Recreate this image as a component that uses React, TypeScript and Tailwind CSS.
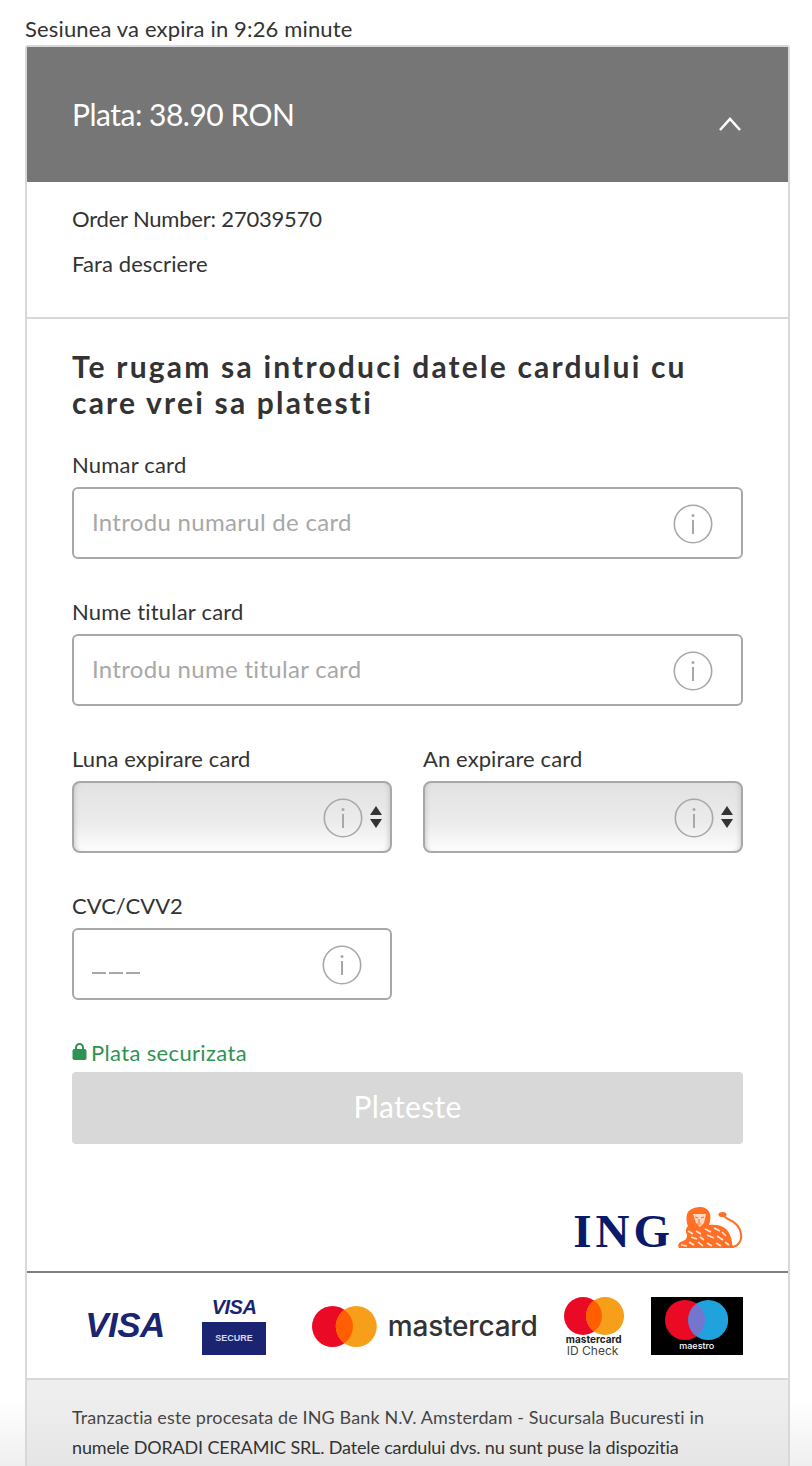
const font = "font-['Lato','Open_Sans',sans-serif]"

function InfoIcon() {
  return (
    <svg width="40" height="40" viewBox="0 0 40 40" className="mt-[2px] shrink-0" fill="none">
      <circle cx="20" cy="20" r="18.7" stroke="#a8a8a8" strokeWidth="1.6" />
      <circle cx="20" cy="11.5" r="1.5" fill="#a8a8a8" />
      <rect x="19" y="16" width="2" height="14" fill="#a8a8a8" />
    </svg>
  )
}

function Field({ label, placeholder }: { label: string; placeholder: string }) {
  return (
    <div className="mb-[38px]">
      <div className="h-[29px] text-[22px] leading-[29px] tracking-[0.2px] text-[#333]">{label}</div>
      <div className="mt-[8px] flex h-[72px] items-center justify-between rounded-[6px] border-2 border-[#a8a8a8] pl-[18px] pr-[28px]">
        <span className="mb-[2px] text-[24px] tracking-[0.3px] text-[#a8a8a8]">{placeholder}</span>
        <InfoIcon />
      </div>
    </div>
  )
}

function SelectField({ label }: { label: string }) {
  return (
    <div className="w-[320px]">
      <div className="h-[29px] text-[22px] leading-[29px] tracking-[0.1px] text-[#333]">{label}</div>
      <div className="mt-[8px] flex h-[72px] items-center justify-end rounded-[8px] border-2 border-[#a8a8a8] bg-[linear-gradient(#e2e2e2,#ececec_60%,#fdfdfd)] pr-[8px] shadow-[inset_5px_0_5px_-4px_#c8c8c8,inset_-5px_0_5px_-4px_#c8c8c8]">
        <InfoIcon />
        <svg width="12" height="22" viewBox="0 0 12 22" className="ml-[7px]" fill="#333">
          <path d="M6 0 L12 9 H0 Z" />
          <path d="M6 22 L0 13 H12 Z" />
        </svg>
      </div>
    </div>
  )
}

// orange ING lion, body with light fur marks
function Lion() {
  return (
    <svg width="65" height="42" viewBox="0 0 65 42" className="mt-[1px]">
      <path
        d="M1 41 C-1 38 1 35 5 34 C8 33 9 31 9 28 C7 24 8 21 10 19 C8 15 8 8 10 5 C13 1 19 0 23 0 C27 0 31 3 32 7 C33 11 32 15 31 18 C37 17 44 18 48 22 C52 26 54 32 54 37 L56 41 Z"
        fill="#ff6f26"
      />
      <path d="M15 7 L28 7 L26 16 L22 20 L18 16 Z" fill="#ffd9c2" />
      <path d="M17 10 L20 11 M26 10 L23 11 M21 12 L21 16 M19 17 L23 17" stroke="#ff6f26" strokeWidth="1.2" fill="none" />
      <path
        d="M10 24 L15 27 M18 24 L23 27 M27 22 L33 25 M36 21 L42 24 M44 25 L48 29 M29 28 L36 31 M39 29 L45 33 M13 30 L19 32 M22 30 L26 33 M3 38 L9 39 M11 35 L16 38 M20 35 L25 39 M29 36 L34 39 M38 36 L43 39 M47 35 L51 38"
        stroke="#ffe6d6"
        strokeWidth="1.6"
        fill="none"
      />
      <path d="M53 40 C60 40 64 34 63 27 C62 19 57 15 50 12 C48 11 47 10 46 9" stroke="#ff6f26" strokeWidth="2" fill="none" />
      <ellipse cx="44.5" cy="7.5" rx="4" ry="2.6" fill="#ff6f26" />
    </svg>
  )
}

function VisaWord({ size }: { size: string }) {
  return <span className={`font-['Liberation_Sans'] font-bold italic tracking-[-0.5px] text-[#1a2471] ${size}`}>VISA</span>
}

function Circles({ d, right, mid }: { d: number; right: string; mid: string }) {
  const r = d / 2
  const gap = d * 0.42
  const h = Math.sqrt(r * r - (r - gap / 2) ** 2)
  return (
    <svg width={d * 2 - gap} height={d} viewBox={`0 0 ${d * 2 - gap} ${d}`}>
      <circle cx={r} cy={r} r={r} fill="#eb0a26" />
      <circle cx={d - gap + r} cy={r} r={r} fill={right} />
      <path
        d={`M${d - gap / 2} ${r - h} A${r} ${r} 0 0 1 ${d - gap / 2} ${r + h} A${r} ${r} 0 0 1 ${d - gap / 2} ${r - h} Z`}
        fill={mid}
      />
    </svg>
  )
}

export default function App() {
  return (
    <div className={`relative h-[1466px] w-[812px] overflow-hidden bg-white ${font}`}>
      <div className="h-[45px] pl-[25px] pt-[14px] text-[22px] leading-[29px] tracking-[0.15px] text-[#333]">
        Sesiunea va expira in 9:26 minute
      </div>
      <div className="ml-[25px] w-[765px] rounded-t-[3px] border-2 border-[#d8d8d8]">
        <div className="flex h-[135px] items-start justify-between bg-[#767676] pl-[45px] pr-[46px] pt-[47px] text-white">
          <span className="text-[30px] leading-[40px] tracking-[-0.5px]">Plata: 38.90 RON</span>
          <svg width="24" height="16" viewBox="0 0 24 16" fill="none" className="mt-[22px]">
            <path d="M2 14 L12 3 L22 14" stroke="#fff" strokeWidth="2.6" />
          </svg>
        </div>

        <div className="h-[137px] border-b-2 border-[#d8d8d8] pl-[45px] pt-[22px] text-[22px] leading-[29px] text-[#333]">
          <div className="tracking-[-0.2px]">Order Number: 27039570</div>
          <div className="mt-[16px] tracking-[0.1px]">Fara descriere</div>
        </div>

        <div className="px-[45px] pt-[29px]">
          <h1 className="text-[30px] font-bold leading-[36px] tracking-[2.2px] text-[#333]">
            Te rugam sa introduci datele cardului cu care vrei sa platesti
          </h1>
          <div className="mt-[30px]">
            <Field label="Numar card" placeholder="Introdu numarul de card" />
            <Field label="Nume titular card" placeholder="Introdu nume titular card" />
          </div>
          <div className="flex gap-[31px]">
            <SelectField label="Luna expirare card" />
            <SelectField label="An expirare card" />
          </div>
          <div className="mt-[38px] w-[320px]">
            <div className="h-[29px] text-[22px] leading-[29px] text-[#333]">CVC/CVV2</div>
            <div className="mt-[8px] flex h-[72px] items-center justify-between rounded-[6px] border-2 border-[#a8a8a8] pl-[18px] pr-[28px]">
              <div className="mt-[18px] flex gap-[3px]">
                <span className="h-[2px] w-[14px] bg-[#a8a8a8]" />
                <span className="h-[2px] w-[14px] bg-[#a8a8a8]" />
                <span className="h-[2px] w-[14px] bg-[#a8a8a8]" />
              </div>
              <InfoIcon />
            </div>
          </div>
          <div className="mt-[38px] flex h-[29px] items-center text-[22px] leading-[29px] tracking-[0.35px] text-[#2f9353]">
            <svg width="15" height="18" viewBox="0 0 15 18" className="mb-[4px] mr-[4px]" fill="#2f9353">
              <path d="M3 8 V5.5 A4.5 4.5 0 0 1 12 5.5 V8 H10 V5.5 A2.5 2.5 0 0 0 5 5.5 V8 Z" />
              <rect x="0.5" y="7" width="14" height="11" rx="1.8" />
            </svg>
            Plata securizata
          </div>
          <div className="mt-[5px] flex h-[72px] items-center justify-center rounded-[4px] bg-[#d8d8d8] text-[30px] tracking-[0.3px] text-white">
            <span className="mb-[3px]">Plateste</span>
          </div>
          <div className="mt-[62px] flex h-[65px] items-start justify-end gap-[4px]">
            <span className="mt-[-1px] font-['Liberation_Serif'] text-[47px] font-bold leading-[52px] tracking-[4px] text-[#0a1a6a]">ING</span>
            <Lion />
          </div>
        </div>

        <div className="h-[2px] bg-[#808080]" />

        <div className="flex h-[105px] items-start pl-[58px] pt-[24px]">
          <div className="mt-[8px] w-[80px] text-center leading-[40px]"><VisaWord size="text-[35px]" /></div>
          <div className="ml-[37px] flex w-[64px] flex-col items-center">
            <div className="h-[24px] leading-[20px]"><VisaWord size="text-[20px]" /></div>
            <div className="mt-[1px] flex h-[33px] w-full items-center justify-center bg-[#1a2471] font-['Liberation_Sans'] text-[9px] font-bold text-[#d5d8ee]">SECURE</div>
          </div>
          <div className="ml-[46px] mt-[9px] flex items-center gap-[11px]">
            <Circles d={41} right="#f79e1b" mid="#ff5f00" />
            <span className="w-[149px] font-['Inter'] text-[28px] font-medium leading-[41px] tracking-[-0.2px] text-[#333]">mastercard</span>
          </div>
          <div className="ml-[28px] flex w-[58px] flex-col items-center">
            <Circles d={38} right="#f79e1b" mid="#ff5f00" />
            <div className="font-['Inter'] text-[10px] font-bold leading-[9px] text-[#222]">mastercard</div>
            <div className="mt-[1px] w-full pl-[2px] font-['Inter'] text-[12px] leading-[12px] text-[#444]">ID Check</div>
          </div>
          <div className="ml-[28px] flex h-[58px] w-[92px] flex-col items-center bg-black pt-[3px]">
            <Circles d={40} right="#1fa3dc" mid="#7375cf" />
            <div className="font-['Inter'] text-[9px] font-medium leading-[11px] text-white">maestro</div>
          </div>
        </div>

        <div className="h-[200px] border-t-2 border-[#d8d8d8] bg-[#eeeeee] pl-[45px] pt-[22px] text-[18px] leading-[30px] text-[#333]">
          <span className="tracking-[0.12px]">Tranzactia este procesata de ING Bank N.V. Amsterdam - Sucursala Bucuresti in</span>
          <br />
          <span className="relative z-10 tracking-[-0.16px]">numele DORADI CERAMIC SRL. Datele cardului dvs. nu sunt puse la dispozitia</span>
        </div>
      </div>
      {/* fade at the bottom of the page */}
      <div className="absolute inset-x-0 bottom-0 h-[66px] bg-[linear-gradient(transparent,#d8d8d8cc)] opacity-50" />
    </div>
  )
}
